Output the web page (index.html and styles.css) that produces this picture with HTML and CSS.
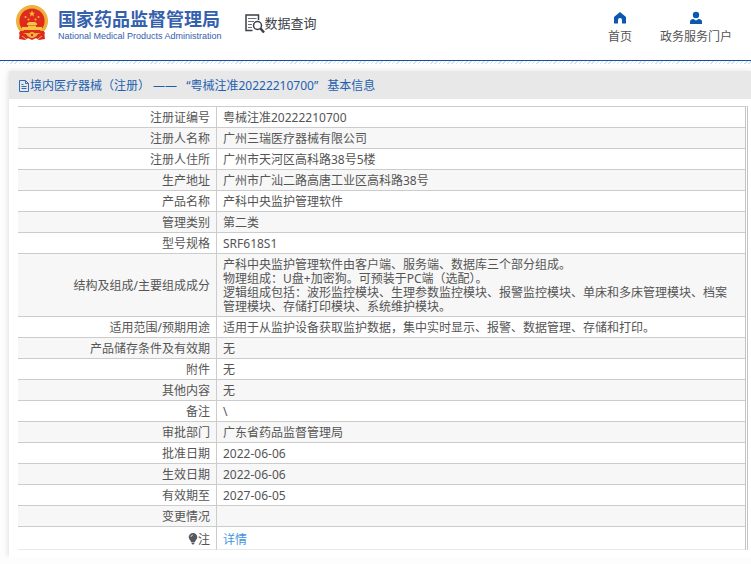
FILE: index.html
```html
<!DOCTYPE html>
<html lang="zh-CN">
<head>
<meta charset="utf-8">
<title>国家药品监督管理局 数据查询</title>
<link rel="stylesheet" href="styles.css">
</head>
<body>
<header class="site-header">
  <div class="brand">
    <svg class="emblem" viewBox="0 0 34 36" aria-hidden="true">
      <path d="M5 27 L29 27 L30 34 L24 35 L21 33 L17 35 L13 33 L10 35 L4 34Z" fill="#d92b1f"/>
      <circle cx="17" cy="16" r="16" fill="#eeb13c"/>
      <circle cx="17" cy="16" r="12.6" fill="#df2a1c"/>
      <path d="M17 5.500l.8 2.200h2.300l-1.800 1.400.7 2.300-2-1.400-2 1.400.7-2.300-1.800-1.400h2.300z" fill="#f6c944"/>
      <g fill="#f2bd40"><circle cx="10.500" cy="12" r="1"/><circle cx="23.500" cy="12" r="1"/><circle cx="13.500" cy="14.500" r="1"/><circle cx="20.500" cy="14.500" r="1"/></g>
      <path d="M12 18.500l2-1.500h6l2 1.500v1.500H12zM13 20.500h8v1.500h6v3H7v-3h6z" fill="#f4c545"/>
      <path d="M5 26h24v2H5z" fill="#df2a1c"/>
      <path d="M4 27l7 2 3 4-8 1zM30 27l-7 2-3 4 8 1z" fill="#d92b1f"/>
      <circle cx="17" cy="30" r="3" fill="#f0b93e"/><circle cx="17" cy="30" r="1.200" fill="#df2a1c"/>
      <path d="M7 31l4 3M27 31l-4 3" stroke="#eeb13c"/>
    </svg>
    <div class="brand-text">
      <strong class="brand-zh">国家药品监督管理局</strong>
      <span class="brand-en" lang="en">National Medical Products Administration</span>
    </div>
  </div>
  <div class="section-name">
    <svg class="query-icon" viewBox="0 0 20 20" fill="none" stroke="#3d3f49" aria-hidden="true">
      <path d="M13.500 6V1H1v15.500h6.500" stroke-width="1.500"/>
      <path d="M3 4.500h8.500M3 7.500h6M3 10.500h4M3 13.500h4" stroke="#70727b" stroke-width="1.200"/>
      <circle cx="12.500" cy="11.500" r="4" stroke-width="1.500"/>
      <path d="M15.500 14.500l3.500 4" stroke-width="2.500"/>
    </svg>
    <span>数据查询</span>
  </div>
  <nav class="site-nav">
    <a href="#home">
      <svg class="nav-icon" viewBox="0 0 14 14" aria-hidden="true"><path d="M7 1l6 5v6.500H9V9a2 2 0 0 0-4 0v3.500H1V6z" fill="#0b58b0"/></svg>
      <span>首页</span>
    </a>
    <a href="#portal">
      <svg class="nav-icon" viewBox="0 0 14 14" aria-hidden="true"><circle cx="7" cy="4" r="3.200" fill="#0b58b0"/><path d="M1 13v-2q0-3 3.500-3L7 9.500 9.500 8Q13 8 13 11v2z" fill="#0b58b0"/></svg>
      <span>政务服务门户</span>
    </a>
  </nav>
</header>
<div class="hatch"></div>
<main class="panel">
  <h1 class="panel-title">
    <svg class="doc-icon" viewBox="0 0 12 12" fill="none" stroke="#2f6cb8" aria-hidden="true"><path d="M1.500 .5h6l3 3v8h-9zM7.500 .5v3h3M3.500 4.500h2M3.500 6.500h5M3.500 8.500h5"/></svg>
    <span class="title-parts"><span>境内医疗器械（注册） ——</span> <span>“粤械注准20222210700”</span> <span>基本信息</span></span>
  </h1>
  <table class="info">
    <tbody>
      <tr><th scope="row">注册证编号</th><td>粤械注准20222210700</td></tr>
      <tr><th scope="row">注册人名称</th><td>广州三瑞医疗器械有限公司</td></tr>
      <tr><th scope="row">注册人住所</th><td>广州市天河区高科路38号5楼</td></tr>
      <tr><th scope="row">生产地址</th><td>广州市广汕二路高唐工业区高科路38号</td></tr>
      <tr><th scope="row">产品名称</th><td>产科中央监护管理软件</td></tr>
      <tr><th scope="row">管理类别</th><td>第二类</td></tr>
      <tr><th scope="row">型号规格</th><td>SRF618S1</td></tr>
      <tr><th scope="row">结构及组成/主要组成成分</th><td>产科中央监护管理软件由客户端、服务端、数据库三个部分组成。<br>物理组成：U盘+加密狗。可预装于PC端（选配）。<br>逻辑组成包括：波形监控模块、生理参数监控模块、报警监控模块、单床和多床管理模块、档案管理模块、存储打印模块、系统维护模块。</td></tr>
      <tr><th scope="row">适用范围/预期用途</th><td>适用于从监护设备获取监护数据，集中实时显示、报警、数据管理、存储和打印。</td></tr>
      <tr><th scope="row">产品储存条件及有效期</th><td>无</td></tr>
      <tr><th scope="row">附件</th><td>无</td></tr>
      <tr><th scope="row">其他内容</th><td>无</td></tr>
      <tr><th scope="row">备注</th><td>\</td></tr>
      <tr><th scope="row">审批部门</th><td>广东省药品监督管理局</td></tr>
      <tr><th scope="row">批准日期</th><td>2022-06-06</td></tr>
      <tr><th scope="row">生效日期</th><td>2022-06-06</td></tr>
      <tr><th scope="row">有效期至</th><td>2027-06-05</td></tr>
      <tr><th scope="row">变更情况</th><td></td></tr>
      <tr class="note"><th scope="row"><svg class="bulb-icon" viewBox="0 0 10 12" aria-hidden="true"><path d="M5 0a4.300 4.300 0 0 1 4.300 4.300c0 2-2 3-2.300 4.700H3C2.700 7.300.7 6.300.7 4.300A4.300 4.300 0 0 1 5 0zM3.500 9.500h3v1l-1 1h-1l-1-1z" fill="#55585e"/><path d="M3 4q0-2 2-2" fill="none" stroke="#c8cacc"/></svg>注</th><td><a href="#detail">详情</a></td></tr>
    </tbody>
  </table>
</main>
</body>
</html>
```
FILE: styles.css
```css
* {
  box-sizing: border-box;
}

body {
  margin: 0;
  background: #fdfdfd;
  color: #555;
  font: 12px/14px "Noto Sans", "Noto Sans CJK SC", sans-serif;
}

a {
  color: inherit;
  text-decoration: none;
}

.site-header {
  display: flex;
  align-items: flex-start;
  height: 61px;
  padding: 0 19px 0 15px;
  background: #fff;
  border-bottom: 1px solid #1c4f94;
}

.hatch {
  height: 3px;
  background: repeating-linear-gradient(135deg, #cfe2f5 0 1px, #fff 1px 3px);
}

.brand {
  display: flex;
  gap: 9px;
  padding-top: 5px;
}

.emblem {
  width: 34px;
  height: 36px;
}

.brand-text {
  display: flex;
  flex-direction: column;
  gap: 1px;
  padding-top: 4px;
  color: #3560ad;
  white-space: nowrap;
}

.brand-zh {
  font-size: 18px;
  line-height: 20px;
}

.brand-en {
  font: 9px/12px "Liberation Sans", sans-serif;
}

.section-name {
  display: flex;
  margin: 14px 0 0 23px;
  color: #3d3f49;
  font-size: 13px;
  line-height: 18px;
}

.query-icon {
  width: 20px;
  height: 20px;
}

.site-nav {
  display: flex;
  gap: 28px;
  margin-left: auto;
  padding-top: 11px;
}

.site-nav a {
  display: flex;
  flex-direction: column;
  align-items: center;
  gap: 5px;
}

.nav-icon {
  width: 14px;
  height: 14px;
}

.panel {
  margin: 7px 0 0 9px;
  padding-bottom: 7px;
  background: #fff;
  box-shadow: 0 1px 6px #d8d8d8;
}

.panel-title {
  display: flex;
  align-items: center;
  height: 28px;
  margin: 0;
  padding: 2px 9px 0;
  background: #e8e8e8;
  color: #1e5fb0;
  font-size: 12px;
  font-weight: 400;
}

.title-parts {
  display: flex;
  gap: 9px;
}

.doc-icon {
  width: 12px;
  height: 12px;
}

.info {
  width: calc(100% - 12px);
  margin: 7px 3px 0 9px;
  border-collapse: separate;
  border-spacing: 0;
  border-top: 1px solid #ccc;
  border-right: 3px double #c4c4c4;
}

.info th,
.info td {
  padding: 4px 6px 2px;
  border-bottom: 1px solid #ccc;
  height: 21px;
  font-weight: 400;
}

.info td {
  padding-right: 16px;
}

.info th {
  width: 199px;
  border-right: 1px solid #ccc;
  text-align: right;
}

.info tr:nth-child(even) {
  background: #f7f7f7;
}

.info .note th,
.info .note td {
  height: 23px;
  padding-top: 6px;
  border-bottom-color: #eaeaea;
}

.info td a {
  color: #4295df;
}

.bulb-icon {
  width: 10px;
  height: 12px;
  vertical-align: -1px;
}
```
